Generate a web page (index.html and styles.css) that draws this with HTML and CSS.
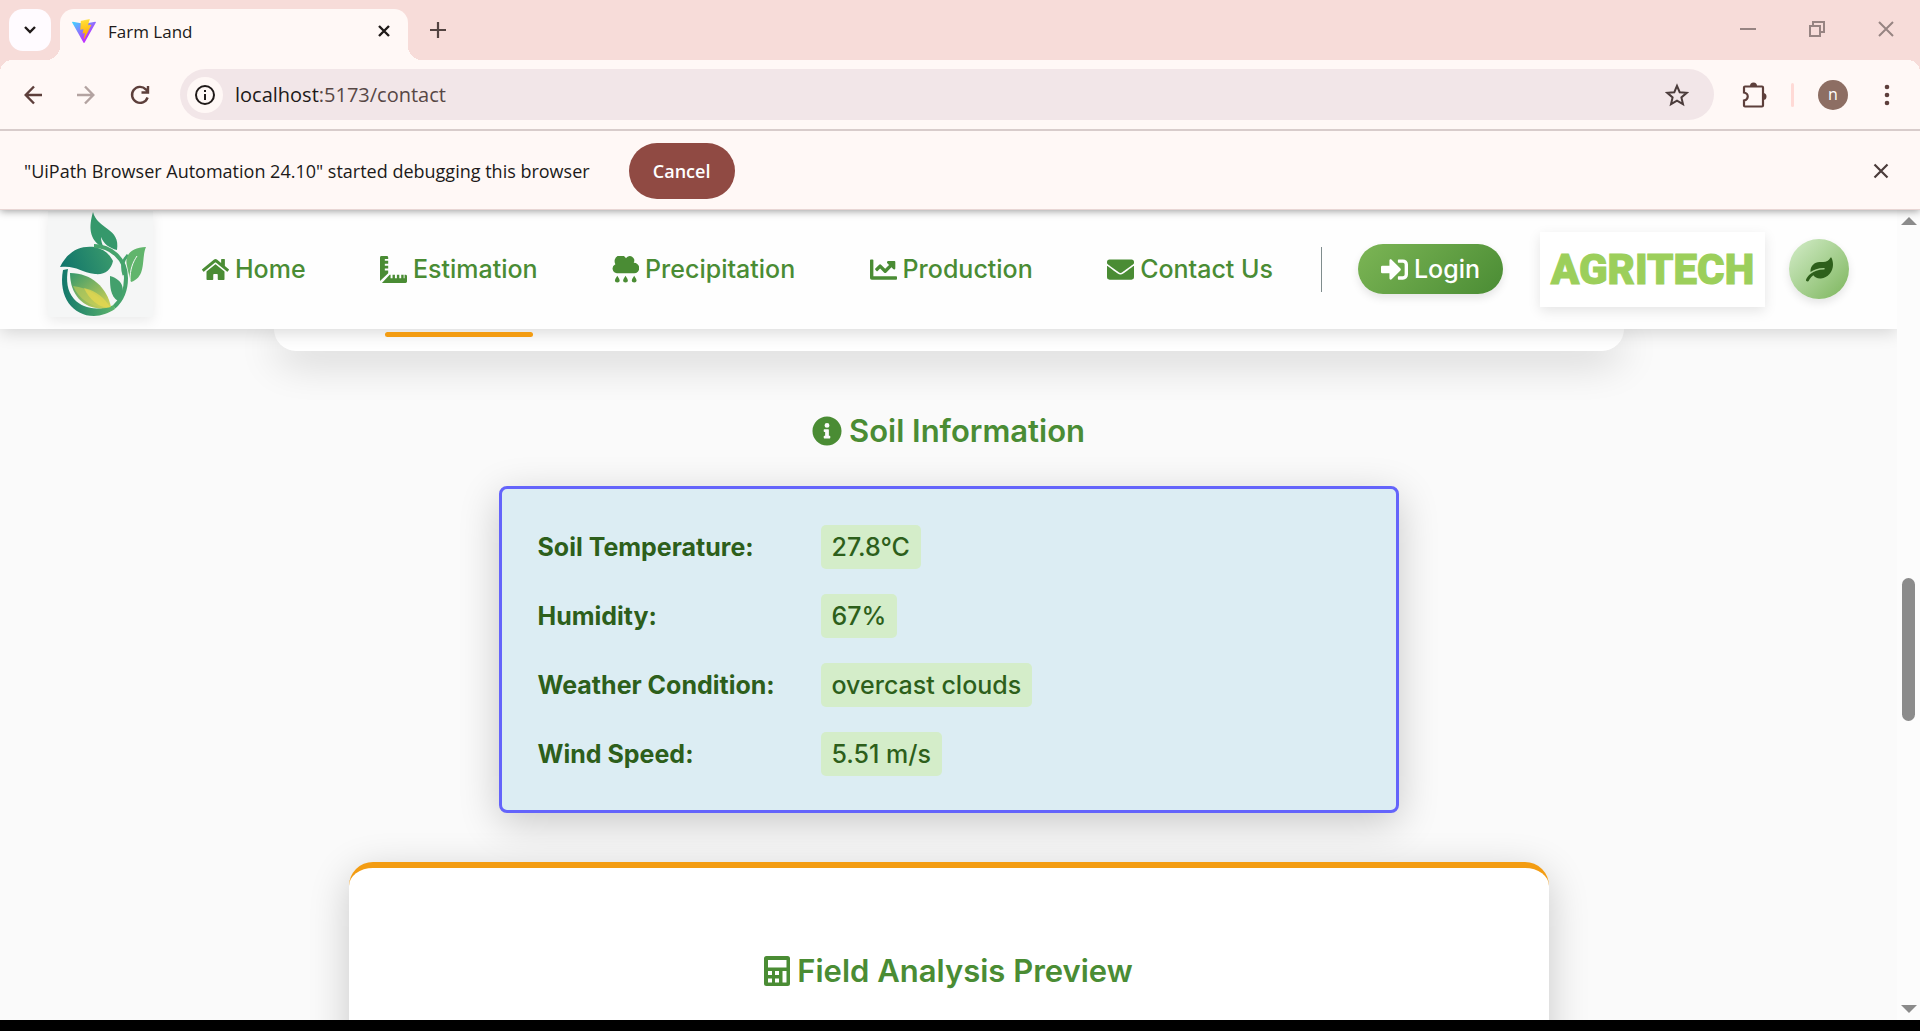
FILE: index.html
```html
<!DOCTYPE html>
<html lang="en">
<head>
<meta charset="utf-8">
<title>Farm Land</title>
<link rel="stylesheet" href="styles.css">
</head>
<body>
<div class="browser">
  <header class="tabstrip">
    <button class="tab-search" aria-label="Search tabs"><svg width="12" height="8" viewBox="0 0 12 8"><path d="M1 1l5 5 5-5" fill="none" stroke="#201a19" stroke-width="2.4"/></svg></button>
    <div class="tab">
      <svg class="favicon" viewBox="0 0 256 257"><defs><linearGradient id="v1" x1="-.8%" x2="57.6%" y1="7.7%" y2="78.4%"><stop offset="0" stop-color="#41d1ff"/><stop offset="1" stop-color="#bd34fe"/></linearGradient><linearGradient id="v2" x1="43.4%" x2="50.3%" y1="2.2%" y2="89%"><stop offset="0" stop-color="#ffea83"/><stop offset=".08" stop-color="#ffdd35"/><stop offset="1" stop-color="#ffa800"/></linearGradient></defs><path fill="url(#v1)" d="M255.2 37.9 134.9 252.9c-2.5 4.5-8.9 4.5-11.4.1L.9 38c-2.7-4.8 1.4-10.6 6.8-9.600l120.400 21.500a6.500 6.500 0 0 0 2.300 0l117.900-21.500c5.400-1 9.500 4.800 6.900 9.500Z"/><path fill="url(#v2)" d="M185.400 0 96.400 17.500a3.300 3.300 0 0 0-2.600 3l-5.500 92.500a3.300 3.300 0 0 0 4 3.400l24.800-5.700a3.300 3.300 0 0 1 4 3.900l-7.400 36a3.300 3.300 0 0 0 4.200 3.800l15.300-4.600a3.300 3.300 0 0 1 4.200 3.800l-11.700 56.600c-.7 3.500 4 5.500 5.900 2.500l1.300-2 72.500-144.700c1.200-2.400-.9-5.200-3.500-4.700l-25.500 5a3.300 3.300 0 0 1-3.800-4.200l16.600-57.600c.8-2.600-1.100-5-3.800-4.500Z"/></svg>
      <span class="tab-title">Farm Land</span>
      <button class="icon-button" aria-label="Close tab"><svg width="14" height="14" viewBox="0 0 14 14"><path d="M2 2l10 10M12 2L2 12" stroke="#201a19" stroke-width="2.400"/></svg></button>
    </div>
    <button class="icon-button new-tab" aria-label="New tab"><svg width="16" height="16" viewBox="0 0 16 16"><path d="M8 0v16M0 8h16" stroke="#534341" stroke-width="2.200"/></svg></button>
    <div class="window-controls">
      <button class="icon-button" aria-label="Minimize"><svg width="16" height="16" viewBox="0 0 16 16"><path d="M0 8h16" stroke="#978482" stroke-width="2"/></svg></button>
      <button class="icon-button" aria-label="Restore"><svg width="16" height="16" viewBox="0 0 16 16" fill="none" stroke="#978482" stroke-width="2"><path d="M1 5h10v10H1zM4 5V1h11v10h-4"/></svg></button>
      <button class="icon-button" aria-label="Close"><svg width="16" height="16" viewBox="0 0 16 16"><path d="M1 1l14 14M15 1L1 15" stroke="#978482" stroke-width="2"/></svg></button>
    </div>
  </header>
  <div class="toolbar">
    <div class="history">
      <button class="icon-button" aria-label="Back"><svg width="18" height="20" viewBox="0 0 18 20" fill="none" stroke="#5d3f3b" stroke-width="2.400"><path d="M18 10H2M10 1.500L1.700 10l8.300 8.500"/></svg></button>
      <button class="icon-button" aria-label="Forward"><svg width="18" height="20" viewBox="0 0 18 20" fill="none" stroke="#b3a3a1" stroke-width="2.400"><path d="M0 10h16M8 1.500l8.300 8.500L8 18.500"/></svg></button>
      <button class="icon-button" aria-label="Reload"><svg width="20" height="20" viewBox="0 0 20 20" fill="none" stroke="#5d3f3b" stroke-width="2.400"><path d="M17.600 12.500A8 8 0 1 1 15.800 4.300l2 2.500M18 1v6.500h-6.500"/></svg></button>
    </div>
    <div class="omnibox">
      <span class="site-info"><svg width="20" height="20" viewBox="0 0 20 20"><circle cx="10" cy="10" r="9" fill="none" stroke="#201a19" stroke-width="2"/><path d="M10 9v6M10 5v2" stroke="#201a19" stroke-width="2"/></svg></span>
      <a class="url" href="#"><span class="host">localhost</span>:5173/contact</a>
      <button class="icon-button" aria-label="Bookmark"><svg width="24" height="24" viewBox="0 0 24 24" fill="none" stroke="#4b3c3b" stroke-width="2"><path d="M12 2.800l2.700 6.400 7 .6-5.300 4.600 1.600 6.800-6-3.600-6 3.600 1.600-6.800L2.300 9.800l7-.6z"/></svg></button>
    </div>
    <div class="actions">
      <button class="icon-button" aria-label="Extensions"><svg width="26" height="26" viewBox="0 0 26 26"><path d="M3 5.500q0-1 1-1h17q1 0 1 1v18q0 1-1 1H4q-1 0-1-1v-5c5-1 5-7 0-8z" fill="none" stroke="#5d3f3b" stroke-width="2.200"/><path d="M9 4a3.500 3.500 0 0 1 7 0zM22 11a3.500 3.500 0 0 1 0 7z" fill="#5d3f3b"/></svg></button>
      <span class="toolbar-divider"></span>
      <span class="avatar">n</span>
      <button class="icon-button" aria-label="Menu"><svg width="6" height="22" viewBox="0 0 6 22" fill="#5d3f3b"><circle cx="3" cy="3" r="2.300"/><circle cx="3" cy="11" r="2.300"/><circle cx="3" cy="19" r="2.300"/></svg></button>
    </div>
  </div>
  <div class="infobar">
    <span>"UiPath Browser Automation 24.10" started debugging this browser</span>
    <button class="cancel">Cancel</button>
    <button class="icon-button dismiss" aria-label="Dismiss"><svg width="16" height="16" viewBox="0 0 16 16"><path d="M1.500 1.500l13 13M14.500 1.500l-13 13" stroke="#4b3c3b" stroke-width="2.200"/></svg></button>
  </div>
  <div class="viewport">
    <div class="page">
      <nav class="navbar">
        <a class="brand" href="#" aria-label="Home"><svg width="105" height="106" viewBox="0 0 105 106"><defs><linearGradient id="g1" x1="0" x2="1" y1=".5" y2=".3"><stop offset="0" stop-color="#11756b"/><stop offset="1" stop-color="#3a9a6c"/></linearGradient><linearGradient id="g2" x1="0" x2="1"><stop offset="0" stop-color="#12776b"/><stop offset="1" stop-color="#5db46c"/></linearGradient><linearGradient id="g3" x1="0" x2="1" y1="0" y2="1"><stop offset="0" stop-color="#35986b"/><stop offset="1" stop-color="#d8d455"/></linearGradient></defs>
          <path d="M12 56C20 40 32 34 47 36c8 2 14 6 18 14-2 9-8 14-18 13-15-2-19-9-35-7z" fill="url(#g1)"/>
          <path d="M45 1c-4 14-5 28 11 36-2-4-3-7-3-11 3 7 8 11 16 13 4-22-20-21-24-38z" fill="#35986b"/>
          <path d="M46 35c16 0 32 12 32 32 0 13-4 22-12 29" fill="none" stroke="#45a36c" stroke-width="4"/>
          <path d="M76 64c-3-10-1-15 4-20" fill="none" stroke="#45a36c" stroke-width="3"/>
          <path d="M98 36c-14 0-22 8-19 19 1 5 2 9 4 16 16-5 10-24 15-35z" fill="#61b56c"/>
          <path d="M82 69c0-11 3-18 7-24" fill="none" stroke="#f5f6f6" stroke-width="1"/>
          <path d="M62 65c14 4 16 15 8 25-8-5-8-15-8-25z" fill="#43a06c"/>
          <path d="M15 59C10 86 25 105 46 105c7 0 15-3 21-7l-1-4c-16 6-31 4-40-6-7-8-8-19-6-30z" fill="url(#g2)"/>
          <path d="M22 62c22 0 37 15 41 34-22 6-41-8-41-34z" fill="url(#g3)"/>
          <path d="M25 75c16 2 27 10 33 21-13 1-27-7-33-21z" fill="#c7cf58" opacity=".6"/>
          <path d="M36 77c12 3 20 9 26 19-9 2-20-6-26-19z" fill="#e8d84e" opacity=".7"/>
        </svg></a>
        <ul class="nav-links">
          <li><a href="#"><svg class="ico" viewBox="0 0 576 512"><path d="M280.400 148.300L96 300.100V464a16 16 0 0 0 16 16l112.100-.3a16 16 0 0 0 15.900-16V368a16 16 0 0 1 16-16h64a16 16 0 0 1 16 16v95.600a16 16 0 0 0 16 16.100L464 480a16 16 0 0 0 16-16V300L295.700 148.300a12.200 12.200 0 0 0-15.300 0zM571.600 251.500L488 182.600V44a12 12 0 0 0-12-12h-56a12 12 0 0 0-12 12v72.600L318.500 43a48 48 0 0 0-61 0L4.300 251.500a12 12 0 0 0-1.600 16.900l25.500 31a12 12 0 0 0 16.900 1.600l235.200-193.700a12.200 12.200 0 0 1 15.300 0L530.900 301a12 12 0 0 0 16.900-1.600l25.500-31a12 12 0 0 0-1.700-16.900z"/></svg>Home</a></li>
          <li><a href="#"><svg class="ico" viewBox="0 0 28 28"><path d="M1.500 0h5.500q1.500 0 1.500 1.500V3H5v2h3.500v3H5v2h3.500v3H5v2h3.500v3L0 26V1.500Q0 0 1.500 0zM10 19.500h1V23h2v-3.500h2.500V23h2v-3.500H20V23h2v-3.500h2.500V23h1v-3.500h1q1.500 0 1.500 1.500v5.500q0 1.500-1.500 1.500H2z"/></svg>Estimation</a></li>
          <li><a href="#"><svg class="ico" viewBox="0 0 28 28"><path d="M5 18a5 5 0 0 1-1.500-9.500 6 6 0 0 1 11-6.200 4.500 4.500 0 0 1 8 4.700A5.500 5.500 0 0 1 23 18zM5.500 20.500q5 7 0 7t0-7zM14 20.500q5 7 0 7t0-7zM23 20.500q5 7 0 7t0-7z"/></svg>Precipitation</a></li>
          <li><a href="#"><svg class="ico" viewBox="0 0 512 512"><path d="M496 384H64V80a16 16 0 0 0-16-16H16A16 16 0 0 0 0 80v336a32 32 0 0 0 32 32h464a16 16 0 0 0 16-16v-32a16 16 0 0 0-16-16zM464 96H345.900c-21.400 0-32.100 25.900-17 41l32.400 32.400-73.300 73.300-73.400-73.400a32 32 0 0 0-45.300 0l-68.600 68.700a16 16 0 0 0 0 22.600l22.600 22.600a16 16 0 0 0 22.600 0L192 237.300l73.400 73.400a32 32 0 0 0 45.300 0l96-96 32.400 32.400c15.100 15.100 41 4.400 41-17V112a16 16 0 0 0-16.100-16z"/></svg>Production</a></li>
          <li><a href="#"><svg class="ico" viewBox="0 0 512 512"><path d="M502.300 190.800a6 6 0 0 1 9.700 4.700V400a48 48 0 0 1-48 48H48a48 48 0 0 1-48-48V195.600a6 6 0 0 1 9.700-4.700c22.400 17.400 52.100 39.500 154.100 113.600 21.100 15.400 56.700 47.800 92.200 47.600 35.700.3 72-32.800 92.300-47.600 102-74.100 131.600-96.300 154-113.700zM256 320c23.200.4 56.600-29.200 73.400-41.400 132.700-96.300 142.800-104.700 173.400-128.700a24 24 0 0 0 9.200-18.900v-19a48 48 0 0 0-48-48H48a48 48 0 0 0-48 48v19a24 24 0 0 0 9.200 18.900c30.600 23.900 40.700 32.400 173.400 128.700 16.800 12.200 50.200 41.800 73.400 41.400z"/></svg>Contact Us</a></li>
        </ul>
        <div class="nav-end">
          <a class="login" href="#"><svg class="ico" viewBox="0 0 512 512"><path d="M416 448h-84a12 12 0 0 1-12-12v-40a12 12 0 0 1 12-12h84a32 32 0 0 0 32-32V160a32 32 0 0 0-32-32h-84a12 12 0 0 1-12-12V76a12 12 0 0 1 12-12h84a96 96 0 0 1 96 96v192a96 96 0 0 1-96 96zm-47-209L201 71c-15-15-41-4.500-41 17v96H24a24 24 0 0 0-24 24v96a24 24 0 0 0 24 24h136v96c0 21.500 26 32 41 17l168-168a24 24 0 0 0 0-34z"/></svg>Login</a>
          <span class="wordmark">AGRITECH</span>
          <a class="leaf" href="#" aria-label="Profile"><svg class="ico" viewBox="0 0 576 512"><path d="M546.200 9.700c-5.600-12.500-21.600-13-28.300-1.200C486.900 62.400 431.400 96 368 96h-80C182 96 96 182 96 288c0 7 .8 13.700 1.500 20.500C161.300 262.800 253.400 224 384 224a16 16 0 0 1 0 32C132.600 256 26 410.100 2.400 468a32 32 0 0 0 59.200 24.300c2-4.700 28.600-67.300 93.500-115.700 31.300 43.500 87.800 77.500 163.800 70.600C466.300 436.400 576 305.300 576 154.700c0-49.900-10.700-101.600-29.800-145z"/></svg></a>
        </div>
      </nav>
      <main class="content">
        <section class="tabs-card"><span class="active-bar"></span></section>
        <h2><svg class="ico" viewBox="0 0 512 512"><path d="M256 8C119 8 8 119.100 8 256s111 248 248 248 248-111 248-248S393 8 256 8zm0 110a42 42 0 1 1 0 84 42 42 0 0 1 0-84zm56 254a12 12 0 0 1-12 12h-88a12 12 0 0 1-12-12v-24a12 12 0 0 1 12-12h12v-64h-12a12 12 0 0 1-12-12v-24a12 12 0 0 1 12-12h64a12 12 0 0 1 12 12v100h12a12 12 0 0 1 12 12z"/></svg>Soil Information</h2>
        <dl class="soil">
          <dt>Soil Temperature:</dt><dd><span>27.8°C</span></dd>
          <dt>Humidity:</dt><dd><span>67%</span></dd>
          <dt>Weather Condition:</dt><dd><span>overcast clouds</span></dd>
          <dt>Wind Speed:</dt><dd><span>5.51 m/s</span></dd>
        </dl>
        <section class="preview">
          <h2><svg class="ico calc" viewBox="0 0 26 30"><path fill-rule="evenodd" d="M2.500 0h21Q26 0 26 2.500v25q0 2.500-2.500 2.500h-21Q0 30 0 27.500v-25Q0 0 2.500 0zM4 4v7.500h18.500V4zM4 15v4h4v-4zM11 15v4h4v-4zM4 22.500v4h4v-4zM11 22.500v4h4v-4zM18.500 15v11.500h4V15z"/></svg>Field Analysis Preview</h2>
        </section>
      </main>
    </div>
    <div class="scrollbar" aria-hidden="true">
      <svg width="16" height="8" viewBox="0 0 16 8"><path d="M0 8l8-8 8 8z" fill="#8b8b8b"/></svg>
      <span class="thumb"></span>
      <svg width="16" height="8" viewBox="0 0 16 8"><path d="M0 0l8 8 8-8z" fill="#8b8b8b"/></svg>
    </div>
  </div>
</div>
</body>
</html>
```
FILE: styles.css
```css
* { box-sizing: border-box; }
body { margin: 0; background: #000; font-family: "Open Sans", "Noto Sans", sans-serif; color: #201a19; }
button { border: 0; padding: 0; background: none; font: inherit; color: inherit; }
a { color: inherit; text-decoration: none; }
svg { display: block; flex: none; }

.browser { display: flex; flex-direction: column; height: 100vh; padding-bottom: 11px; background: #000; overflow: hidden; }
.icon-button { display: flex; align-items: center; justify-content: center; }

/* Tab strip */
.tabstrip { display: flex; align-items: flex-start; height: 60px; flex: none; padding: 9px 10px 0 9px; background: #f7dcd9; }
.tab-search { display: flex; align-items: center; justify-content: center; width: 42px; height: 42px; border-radius: 14px; background: #fffbff; }
.tab { position: relative; display: flex; align-items: center; width: 348px; height: 51px; margin-left: 9px; padding: 0 17px 8px 12px; border-radius: 14px 14px 0 0; background: #fff8f6; }
.tab::before, .tab::after { content: ""; position: absolute; bottom: 0; width: 14px; height: 14px; }
.tab::before { right: 100%; background: radial-gradient(circle at 0 0, transparent 14px, #fff8f6 14px); }
.tab::after { left: 100%; background: radial-gradient(circle at 100% 0, transparent 14px, #fff8f6 14px); }
.favicon { width: 24px; height: 24px; }
.tab-title { flex: 1; margin-left: 12px; padding-top: 2px; font-size: 17px; }
.new-tab { width: 24px; height: 24px; margin: 9px 0 0 18px; }
.window-controls { display: flex; gap: 53px; margin: 12px 16px 0 auto; }

/* Address bar */
.toolbar { position: relative; display: flex; align-items: center; height: 71px; flex: none; padding: 0 30px 0 20px; border-bottom: 2px solid #d8cccb; background: #fff8f6; }
.toolbar::before, .toolbar::after { content: ""; position: absolute; top: 0; width: 12px; height: 12px; }
.toolbar::before { left: 0; background: radial-gradient(circle at 100% 100%, transparent 12px, #f7dcd9 12px); }
.toolbar::after { right: 0; background: radial-gradient(circle at 0 100%, transparent 12px, #f7dcd9 12px); }
.history { display: flex; align-items: center; gap: 35px; width: 160px; padding-left: 4px; }
.omnibox { display: flex; flex: 1; align-items: center; height: 51px; padding: 0 25px 0 7px; border-radius: 26px; background: #f2e6e8; }
.site-info { display: flex; align-items: center; justify-content: center; width: 36px; height: 36px; border-radius: 50%; background: #fff8f6; }
.url { flex: 1; margin-left: 12px; font-size: 20px; color: #574745; }
.host { color: #201a19; }
.actions { display: flex; align-items: center; margin-left: 27px; }
.toolbar-divider { width: 3px; height: 24px; margin: 0 24px; border-radius: 2px; background: #ffdad6; }
.avatar { width: 30px; height: 30px; margin-right: 36px; border-radius: 50%; background: #8d6e63; color: #fff; font-size: 16px; line-height: 28px; text-align: center; }

/* Debugging notice */
.infobar { position: relative; z-index: 3; display: flex; align-items: center; height: 79px; flex: none; padding: 1px 31px 0 24px; border-bottom: 1px solid #e8d6d4; background: #fff8f6; box-shadow: 0 1px 8px rgba(0, 0, 0, .4); clip-path: inset(0 0 -12px); font-size: 18px; }
.cancel { width: 106px; height: 56px; margin-left: 39px; border-radius: 28px; background: #904a43; color: #fff; font-weight: 600; }
.dismiss { margin-left: auto; }

/* Web page */
.viewport { display: flex; flex: 1; min-height: 0; }
.page { position: relative; flex: 1; overflow: hidden; background: #fafafa; font-family: Inter, "Open Sans", sans-serif; }
.ico { width: 27px; height: 27px; fill: currentColor; }
.navbar { position: relative; z-index: 2; display: flex; align-items: center; height: 119px; padding: 0 48px 1px; background: #fefefe; box-shadow: 0 4px 16px rgba(0, 0, 0, .15); color: #4a8c34; font-size: 25px; font-weight: 500; }
.brand { margin-top: -11px; background: #f5f6f6; box-shadow: 0 4px 12px rgba(0, 0, 0, .08); }
.nav-links { display: flex; flex: 1; justify-content: space-between; margin: 0; padding: 0 48px 0 49px; list-style: none; }
.nav-links a, .login { display: flex; align-items: center; gap: 6px; white-space: nowrap; }
.nav-end { display: flex; align-items: center; padding-left: 37px; background: linear-gradient(#7f8c8d, #7f8c8d) left / 1px 45px no-repeat; }
.login { justify-content: center; width: 145px; height: 50px; border-radius: 25px; background: linear-gradient(135deg, #7cb555, #4a8c34); color: #fff; box-shadow: 0 4px 8px rgba(0, 0, 0, .1); }
.wordmark { display: flex; align-items: center; justify-content: center; width: 225px; height: 75px; margin: 0 24px 0 37px; background: #fff; box-shadow: 0 4px 12px rgba(0, 0, 0, .1); color: #9ccf5b; font-family: Roboto, sans-serif; font-size: 42px; font-weight: 900; -webkit-text-stroke: 1px #9ccf5b; }
.leaf { display: flex; align-items: center; justify-content: center; width: 60px; height: 60px; border-radius: 50%; background: linear-gradient(135deg, #d4edc9, #7cb55c); color: #2d5f1b; box-shadow: 0 4px 8px rgba(0, 0, 0, .1); }

.content { display: flex; flex-direction: column; align-items: center; }
.tabs-card { width: 71.165%; height: 22px; padding: 3px 0 0 111px; border-radius: 0 0 24px 24px; background: #fff; box-shadow: 0 10px 40px rgba(0, 0, 0, .2); }
.active-bar { position: relative; z-index: 3; display: block; width: 148px; height: 5px; border-radius: 3px; background: #f39c12; }
h2 { display: flex; align-items: center; justify-content: center; gap: 7px; margin: 0; color: #4a8c34; font-size: 31px; font-weight: 600; line-height: 45px; }
h2 .ico { width: 30px; height: 30px; }
h2 .calc { width: 26px; }
.tabs-card + h2 { margin: 57px 0 33px; }
.soil { display: grid; grid-template-columns: 283px 1fr; align-content: start; row-gap: 25px; width: 900px; max-width: 90%; margin: 0; padding: 36px 36px 34px; border: 3px solid #6464fb; border-radius: 8px; background: #dcedf3; box-shadow: 0 10px 40px rgba(0, 0, 0, .2); color: #2d5f1b; font-size: 25px; line-height: 44px; }
.soil dt { font-weight: 700; }
.soil dd { margin: 0; font-weight: 500; }
.soil dd span { display: inline-block; padding: 0 11px; border-radius: 5px; background: #d4edc9; }
.preview { width: 1200px; max-width: 95%; margin-top: 49px; padding: 80px 48px 120px; border-top: 6px solid #f39c12; border-radius: 24px; background: #fff; box-shadow: 0 10px 40px rgba(0, 0, 0, .2); }

.scrollbar { display: flex; flex-direction: column; align-items: center; width: 23px; padding: 7px 0 7px; background: #fcfcfc; }
.thumb { width: 13px; height: 143px; margin: 353px 0 auto; border-radius: 7px; background: #8b8b8b; }
```
